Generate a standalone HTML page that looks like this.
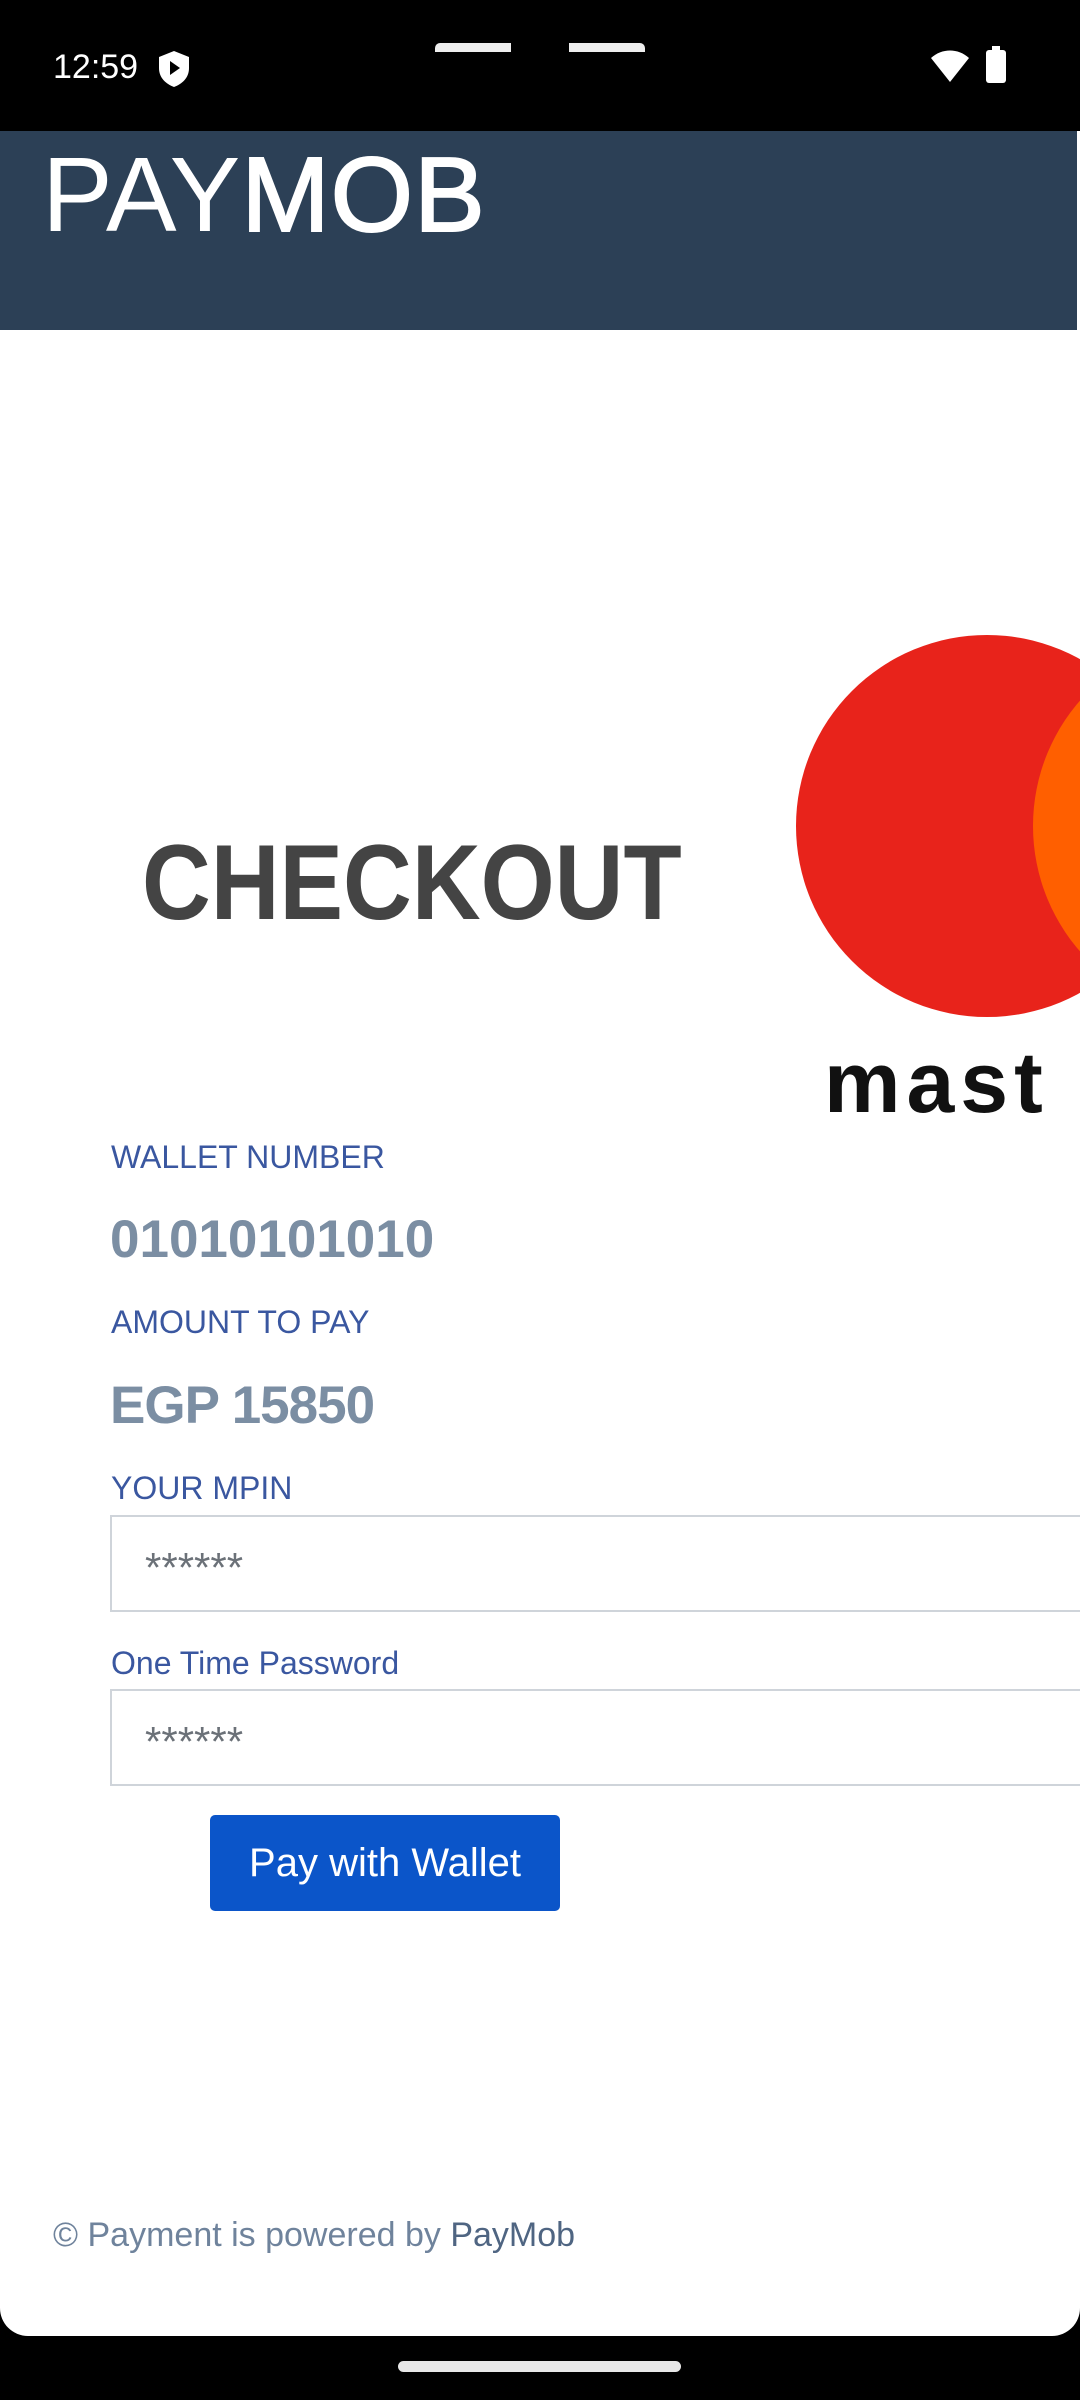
<!DOCTYPE html>
<html><head><meta charset="utf-8"><style>
*{margin:0;padding:0;box-sizing:border-box}
body{width:1080px;height:2400px;background:#000;position:relative;overflow:hidden;font-family:"Liberation Sans",Arial,sans-serif}
.a{position:absolute;white-space:nowrap;line-height:1}
.lbl{font-size:32px;color:#3a57a0;left:111px}
.val{font-size:53px;font-weight:bold;color:#7b8ea3;left:110px}
.inp{position:absolute;left:110px;width:990px;height:97px;border:2px solid #cfd4da;background:#fff}
.inp span{position:absolute;left:33px;top:30px;font-size:42px;color:#6b7178;line-height:1}
</style></head><body>
<div style="position:absolute;left:0;top:131px;width:1080px;height:2205px;background:#fff;border-radius:0 0 28px 28px"></div>
<div style="position:absolute;left:0;top:131px;width:1077px;height:199px;background:#2c4056"></div>
<div class="a" style="left:53px;top:50px;font-size:34px;color:#fff">12:59</div>
<svg class="a" style="left:157px;top:50px" width="34" height="38" viewBox="0 0 34 38"><path d="M17 1 L32 7 V18 C32 28 25 34 17 37 C9 34 2 28 2 18 V7 Z" fill="#fff"/><path d="M13 11 L23 18 L13 25 Z" fill="#000"/></svg>
<div class="a" style="left:435px;top:43px;width:76px;height:9px;background:#eee;border-radius:5px 0 0 0"></div>
<div class="a" style="left:569px;top:43px;width:76px;height:9px;background:#eee;border-radius:0 5px 0 0"></div>
<svg class="a" style="left:930px;top:50px" width="40" height="34" viewBox="0 0 40 34"><path d="M20 32 L1 8 C12 -2 28 -2 39 8 Z" fill="#fff"/></svg>
<div class="a" style="left:986px;top:50px;width:20px;height:33px;background:#fff;border-radius:3px"></div>
<div class="a" style="left:992px;top:46px;width:8px;height:5px;background:#fff"></div>
<div class="a" style="left:42px;top:142px;font-size:106px;color:#fff;letter-spacing:1px"><span>PAY</span><span style="-webkit-text-stroke:2px #fff">MOB</span></div>
<div class="a" style="left:796px;top:635px;width:382px;height:382px;border-radius:50%;background:#e8231b"></div>
<div class="a" style="left:1033px;top:635px;width:382px;height:382px;border-radius:50%;background:#ff5f00;clip-path:circle(191px at 145px 191px)"></div>
<div class="a" style="left:824px;top:1040px;font-size:86px;font-weight:bold;color:#111;letter-spacing:6px">mast</div>
<div class="a" style="left:142px;top:829px;font-size:107px;font-weight:bold;color:#444;transform:scaleX(0.89);transform-origin:left">CHECKOUT</div>
<div class="a lbl" style="top:1141px">WALLET NUMBER</div>
<div class="a val" style="top:1213px">01010101010</div>
<div class="a lbl" style="top:1306px">AMOUNT TO PAY</div>
<div class="a val" style="top:1379px;letter-spacing:-1px">EGP 15850</div>
<div class="a lbl" style="top:1472px">YOUR MPIN</div>
<div class="inp" style="top:1515px"><span>******</span></div>
<div class="a lbl" style="top:1647px">One Time Password</div>
<div class="inp" style="top:1689px"><span>******</span></div>
<div class="a" style="left:210px;top:1815px;width:350px;height:96px;background:#0b55c9;border-radius:5px;color:#fff;font-size:40px;line-height:96px;text-align:center">Pay with Wallet</div>
<div class="a" style="left:53px;top:2218px;font-size:34px;color:#6f839c">© Payment is powered by <span style="color:#4f6582">PayMob</span></div>
<div class="a" style="left:398px;top:2361px;width:283px;height:11px;background:#e8e8e8;border-radius:6px"></div>
</body></html>
